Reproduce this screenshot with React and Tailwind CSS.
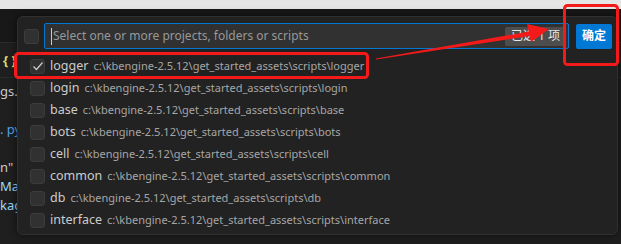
import React from "react";

const rows = [
  ["logger", true],
  ["login", false],
  ["base", false],
  ["bots", false],
  ["cell", false],
  ["common", false],
  ["db", false],
  ["interface", false],
];

function Check({ checked }) {
  return (
    <div className="w-[15px] h-[15px] shrink-0 rounded-[3px] bg-[#313131] border border-[#3c3c3c] flex items-center justify-center">
      {checked && (
        <svg width="12" height="12" viewBox="0 0 12 12" fill="none">
          <path d="M1.5 6.5 L4.5 9.5 L10.5 2.5" stroke="#cccccc" strokeWidth="1.2" />
        </svg>
      )}
    </div>
  );
}

export default function App() {
  const font = { fontFamily: '"Noto Sans", "Noto Sans CJK SC", sans-serif' };
  return (
    <div className="relative w-[621px] h-[244px] overflow-hidden bg-[#1f1f1f]" style={font}>
      <div className="h-[9px] bg-[#e5e5e5]" />
      <div className="h-[34px] bg-[#181818] border-b border-[#2b2b2b]" />
      <div className="h-[35px] flex items-center pl-[3px] border-b border-[#2b2b2b]">
        <span className="text-[#dcdc6a] text-[13px] font-bold leading-none">{"{ }"}</span>
      </div>
      <div className="flex flex-col text-[13px] leading-[19px] pt-[4px] whitespace-nowrap">
        <div className="text-[#cccccc]">gs.j</div>
        <div className="h-[19px]" />
        <div className="text-[#4fa6f0]">. py</div>
        <div className="h-[19px]" />
        <div className="text-[#cccccc]">n" :</div>
        <div className="text-[#9cdcfe]">Mar</div>
        <div className="text-[#9cdcfe]">kag</div>
      </div>

      {/* Quick pick panel */}
      <div className="absolute left-[17px] top-[16px] w-[601px] h-[219px] bg-[#222222] rounded-[6px] border border-[#303030] shadow-[0_0_8px_rgba(0,0,0,0.6)]">
        <div className="flex items-center pt-[6px] pl-[6px] pr-[5px]">
          <Check checked={false} />
          <div className="ml-[5px] w-[525px] h-[26px] bg-[#313131] border border-[#0078d4] rounded-[2px] flex items-center pl-[6px] pr-[2px]">
            <div className="w-px h-[17px] bg-[#cccccc]" />
            <span className="ml-px text-[12px] text-[#989898] flex-1 whitespace-nowrap">Select one or more projects, folders or scripts</span>
            <span className="h-[19px] px-[6px] flex items-center rounded-[2px] bg-[#4d4d4d] text-[12px] text-[#e8e8e8]">已选 1 项</span>
          </div>
          <div className="ml-[7px] w-[36px] h-[25px] rounded-[2px] bg-[#0078d4] flex items-center justify-center text-white text-[12px] font-bold">确定</div>
        </div>
        <div className="mt-[6px] flex flex-col">
          {rows.map(([name, checked]) => (
            <div key={name} className="h-[22px] flex items-center pl-[12px] whitespace-nowrap">
              <Check checked={checked} />
              <span className="ml-[5px] text-[12.5px] text-[#cccccc]">{name}</span>
              <span className="ml-[5px] text-[11px] text-[#a6a6a6]">{`c:\\kbengine-2.5.12\\get_started_assets\\scripts\\${name}`}</span>
            </div>
          ))}
        </div>
      </div>

      {/* Red annotations */}
      <svg className="absolute left-0 top-0 pointer-events-none" width="621" height="244" viewBox="0 0 621 244">
        <rect x="15.5" y="53.5" width="352" height="24" rx="3" fill="none" stroke="#f51a1a" strokeWidth="3" />
        <rect x="564.5" y="5.5" width="53" height="59" rx="3" fill="none" stroke="#f51a1a" strokeWidth="3" />
        <polygon points="376,58.5 532,31 533,35.5 376,59.5" fill="#f51a1a" />
        <polygon points="549,29 527,24 531,42" fill="#f51a1a" />
      </svg>
    </div>
  );
}
